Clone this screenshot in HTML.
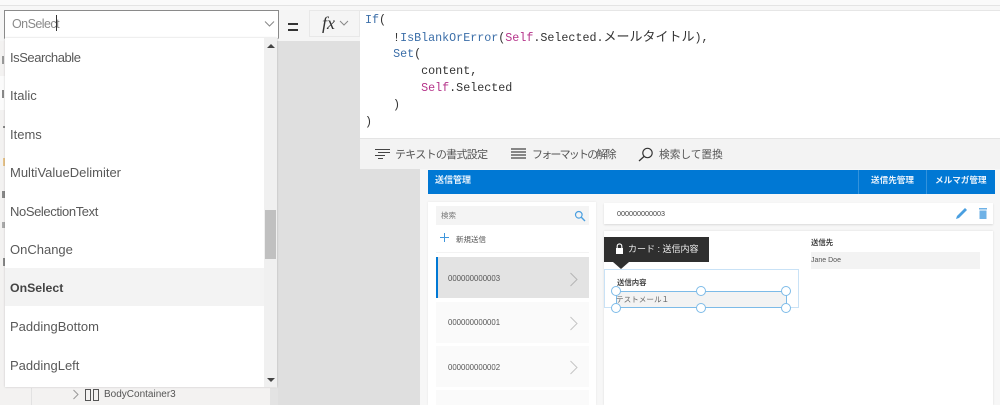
<!DOCTYPE html>
<html><head><meta charset="utf-8">
<style>
html,body{margin:0;padding:0}
body{width:1000px;height:405px;position:relative;overflow:hidden;background:#dfdfdf;font-family:"Liberation Sans","Noto Sans CJK JP",sans-serif;}
#w{position:absolute;left:0;top:0;width:1000px;height:405px;overflow:hidden;filter:blur(.35px)}
.a{position:absolute;white-space:nowrap}
.it{position:absolute;left:10px;font-size:13px;color:#595959;line-height:16px}
.m{font-family:"Liberation Mono","Noto Sans CJK JP",monospace;font-size:11.7px;color:#333;line-height:17px;position:absolute;left:365px;white-space:pre}
.m i{font-style:normal;font-size:13px}
.b{color:#3b6ea8}.p{color:#b5348a}
.t{color:#555;top:147px;line-height:16px}
.c{font-size:7.8px;color:#555}
.row{position:absolute;left:436px;width:153px;background:#fafafa}
.h{position:absolute;width:10px;height:10px;border:1.5px solid #7dbbe8;background:#fff;border-radius:50%;box-sizing:border-box}
</style></head><body><div id="w">
<div class="a" style="left:0;top:0;width:1000px;height:5px;background:#fafafa;border-bottom:1px solid #e4e4e4"></div>
<div class="a" style="left:0;top:6px;width:1000px;height:4px;background:#f7f7f7"></div>
<div class="a" style="left:0;top:10px;width:360px;height:31px;background:#f5f5f5"></div>
<div class="a" style="left:0;top:41px;width:277px;height:364px;background:#f3f2f1"></div>
<div class="a" style="left:0;top:76px;width:5px;height:34px;background:#fbfbfb"></div>
<div class="a" style="left:2px;top:56px;width:2px;height:8px;background:#999"></div>
<div class="a" style="left:2px;top:90px;width:2px;height:8px;background:#888"></div>
<div class="a" style="left:3px;top:126px;width:2px;height:2px;background:#888"></div>
<div class="a" style="left:3px;top:158px;width:2px;height:8px;background:#e8c48a"></div>
<div class="a" style="left:2px;top:191px;width:3px;height:7px;background:#888"></div>
<div class="a" style="left:2px;top:222px;width:3px;height:6px;background:#aaa"></div>
<div class="a" style="left:3px;top:258px;width:2px;height:8px;background:#888"></div>
<div class="a" style="left:31px;top:388px;width:239px;height:17px;background:#f3f2f1;border-left:1px solid #e2e2e2"></div>
<div class="a" style="left:270px;top:388px;width:8px;height:17px;background:#e3e3e3"></div>

<div class="a" style="left:4px;top:10px;width:273px;height:27px;background:#fff;border:1px solid #8a8a8a;border-bottom-color:#ddd"></div>
<div class="a" style="left:12px;top:16px;font-size:12.5px;letter-spacing:-.55px;color:#8a8a8a;line-height:16px">OnSelect</div>
<div class="a" style="left:56px;top:15px;width:1px;height:16px;background:#333"></div>
<svg class="a" style="left:264px;top:20px" width="11" height="8"><path d="M1 1.5L5.5 6L10 1.5" fill="none" stroke="#888" stroke-width="1"/></svg>
<div class="a" style="left:288px;top:23px;width:10px;height:2px;background:#333"></div>
<div class="a" style="left:288px;top:29px;width:10px;height:2px;background:#333"></div>
<div class="a" style="left:309px;top:10px;width:51px;height:27px;background:#f5f5f5;border:1px solid #e8e8e8;box-sizing:border-box"></div>
<div class="a" style="left:322px;top:13px;font-family:'Liberation Serif',serif;font-style:italic;font-size:18px;color:#333;line-height:20px">fx</div>
<svg class="a" style="left:339px;top:20px" width="10" height="7"><path d="M1 1L5 5L9 1" fill="none" stroke="#888" stroke-width="1"/></svg>

<div class="a" style="left:5px;top:38px;width:272px;height:349px;background:#fff;box-shadow:0 0 2px rgba(0,0,0,.2)"></div>
<div class="a" style="left:5px;top:268px;width:259px;height:38px;background:#f3f3f3"></div>
<div class="a" style="left:264px;top:38px;width:13px;height:349px;background:#f0f0f0"></div>
<div class="a" style="left:265px;top:210px;width:11px;height:49px;background:#c0c0c0"></div>
<div class="a" style="left:267px;top:44px;border:4px solid transparent;border-top:0;border-bottom:4px solid #444"></div>
<div class="a" style="left:267px;top:378px;border:4px solid transparent;border-bottom:0;border-top:4px solid #444"></div>
<div class="it" style="top:50px;letter-spacing:-.45px">IsSearchable</div>
<div class="it" style="top:88px">Italic</div>
<div class="it" style="top:127px">Items</div>
<div class="it" style="top:165px">MultiValueDelimiter</div>
<div class="it" style="top:204px;letter-spacing:-.4px">NoSelectionText</div>
<div class="it" style="top:242px">OnChange</div>
<div class="it" style="top:280px;font-weight:bold;color:#444;font-size:12.3px">OnSelect</div>
<div class="it" style="top:319px">PaddingBottom</div>
<div class="it" style="top:358px">PaddingLeft</div>
<svg class="a" style="left:72px;top:389px" width="8" height="11"><path d="M1.5 1L6 5.5L1.5 10" fill="none" stroke="#999" stroke-width="1"/></svg>
<div class="a" style="left:85px;top:389px;width:6px;height:12px;border:1px solid #555;box-sizing:border-box"></div>
<div class="a" style="left:93px;top:389px;width:6px;height:12px;border:1px solid #555;box-sizing:border-box"></div>
<div class="a" style="left:104px;top:387px;font-size:10px;color:#555;line-height:15px">BodyContainer3</div>

<div class="a" style="left:360px;top:10px;width:640px;height:128px;background:#fff;border-top:1px solid #e6e6e6;box-sizing:border-box"></div>
<div class="a" style="left:360px;top:138px;width:640px;height:31px;background:#f3f3f3;border-top:1px solid #e4e4e4;box-sizing:border-box"></div>
<div class="m" style="top:12px"><span class="b">If</span>(</div>
<div class="m" style="top:29px">    !<span class="b">IsBlankOrError</span>(<span class="p">Self</span>.Selected.<i>メールタイトル</i>),</div>
<div class="m" style="top:46px">    <span class="b">Set</span>(</div>
<div class="m" style="top:63px">        content,</div>
<div class="m" style="top:80px">        <span class="p">Self</span>.Selected</div>
<div class="m" style="top:97px">    )</div>
<div class="m" style="top:114px">)</div>

<svg class="a" style="left:375px;top:148px" width="16" height="13"><path d="M0 1.5H15M3 4.5H15M0 7.5H10M3 10.5H8" stroke="#444" stroke-width="1" fill="none"/></svg>
<div class="a t" style="left:395px;font-size:11px;letter-spacing:-.7px">テキストの書式設定</div>
<svg class="a" style="left:511px;top:148px" width="15" height="13"><path d="M0 1H15M0 4H15M0 7H15M0 10H15" stroke="#444" stroke-width="1.2" fill="none"/></svg>
<div class="a t" style="left:532px;font-size:11px;letter-spacing:-1.8px">フォーマットの解除</div>
<svg class="a" style="left:638px;top:147px" width="16" height="15"><circle cx="9.5" cy="6" r="4.7" fill="none" stroke="#333" stroke-width="1.2"/><path d="M6 9.5L1 14" stroke="#333" stroke-width="1.3"/></svg>
<div class="a t" style="left:659px;font-size:10.7px">検索して置換</div>

<div class="a" style="left:420px;top:169px;width:580px;height:236px;background:#f7f7f7"></div>
<div class="a" style="left:428px;top:170px;width:567px;height:24px;background:#0078d4"></div>
<div class="a" style="left:435px;top:174px;font-size:9px;font-weight:bold;color:#e8f2fb;line-height:13px">送信管理</div>
<div class="a" style="left:858px;top:170px;width:1px;height:24px;background:#3393dc"></div>
<div class="a" style="left:926px;top:170px;width:1px;height:24px;background:#3393dc"></div>
<div class="a" style="left:871px;top:174px;font-size:8.6px;font-weight:bold;color:#e8f2fb;line-height:13px">送信先管理</div>
<div class="a" style="left:935px;top:174px;font-size:8.6px;font-weight:bold;color:#e8f2fb;line-height:13px">メルマガ管理</div>

<div class="a" style="left:428px;top:202px;width:168px;height:203px;background:#fff;box-shadow:0 0 2px rgba(0,0,0,.08)"></div>
<div class="a" style="left:436px;top:206px;width:153px;height:19px;background:#f4f4f4"></div>
<div class="a c" style="left:441px;top:210px;color:#777;line-height:11px;font-size:7.5px">検索</div>
<svg class="a" style="left:574px;top:210px" width="12" height="12"><circle cx="4.8" cy="4.8" r="3.3" fill="none" stroke="#4a9fe0" stroke-width="1.2"/><path d="M7.3 7.3L11 11" stroke="#4a9fe0" stroke-width="1.4"/></svg>
<svg class="a" style="left:440px;top:233px" width="10" height="10"><path d="M4.5 0V9M0 4.5H9" stroke="#3f96dc" stroke-width="1"/></svg>
<div class="a c" style="left:456px;top:234px;line-height:11px;font-size:7.5px">新規送信</div>
<div class="a" style="left:436px;top:252px;width:153px;height:1px;background:#f3f3f3"></div>
<div class="a" style="left:436px;top:257px;width:153px;height:41px;background:#e3e3e3;border-left:2px solid #0078d4;box-sizing:border-box"></div>
<div class="a c" style="left:448px;top:273px;line-height:11px">000000000003</div>
<svg class="a" style="left:569px;top:272px" width="10" height="15"><path d="M1.5 1L8 7.5L1.5 14" fill="none" stroke="#b5b5b5" stroke-width="1"/></svg>
<div class="row" style="top:302px;height:41px"></div>
<div class="a c" style="left:448px;top:317px;line-height:11px">000000000001</div>
<svg class="a" style="left:569px;top:316px" width="10" height="15"><path d="M1.5 1L8 7.5L1.5 14" fill="none" stroke="#c5c5c5" stroke-width="1"/></svg>
<div class="row" style="top:346px;height:41px"></div>
<div class="a c" style="left:448px;top:362px;line-height:11px">000000000002</div>
<svg class="a" style="left:569px;top:360px" width="10" height="15"><path d="M1.5 1L8 7.5L1.5 14" fill="none" stroke="#c5c5c5" stroke-width="1"/></svg>
<div class="row" style="top:390px;height:15px"></div>

<div class="a" style="left:604px;top:203px;width:389px;height:21px;background:#fff;box-shadow:0 1px 2px rgba(0,0,0,.12)"></div>
<div class="a c" style="left:617px;top:208px;color:#444;line-height:11px;font-size:7.2px">000000000003</div>
<svg class="a" style="left:955px;top:207px" width="13" height="13"><path d="M1 12L2 9L10 1L12 3L4 11Z" fill="#4a9fe0"/></svg>
<svg class="a" style="left:978px;top:207px" width="10" height="13"><path d="M1 1H9V2.5H1ZM1.5 3.5H8.5V12H1.5Z" fill="#6fb2e6"/></svg>
<div class="a" style="left:604px;top:231px;width:389px;height:174px;background:#fff;box-shadow:0 0 2px rgba(0,0,0,.12)"></div>

<div class="a" style="left:811px;top:237px;font-size:7.4px;font-weight:bold;color:#444;line-height:11px">送信先</div>
<div class="a" style="left:811px;top:252px;width:169px;height:17px;background:#f3f3f3"></div>
<div class="a c" style="left:811px;top:256px;line-height:10px;font-size:7px">Jane Doe</div>

<div class="a" style="left:604px;top:269px;width:195px;height:39px;border:1px solid #c9e2f6;box-sizing:border-box;background:#fff"></div>
<div class="a" style="left:604px;top:237px;width:105px;height:25px;background:#2f2f2f"></div>
<div class="a" style="left:613px;top:262px;border:8px solid transparent;border-bottom:0;border-top:7px solid #2f2f2f"></div>
<svg class="a" style="left:615px;top:243px" width="9" height="12"><path d="M2.2 5V3.2a2.3 2.3 0 0 1 4.6 0V5" fill="none" stroke="#fff" stroke-width="1.1"/><rect x="1" y="5" width="7" height="6" fill="#fff"/></svg>
<div class="a" style="left:628px;top:243px;font-size:9px;color:#eee;line-height:13px">カード : 送信内容</div>
<div class="a" style="left:617px;top:277px;font-size:7.4px;font-weight:bold;color:#444;line-height:11px">送信内容</div>
<div class="a" style="left:616px;top:291px;width:171px;height:17px;background:#f3f3f3;border:1.5px solid #7dbbe8;box-sizing:border-box"></div>
<div class="h" style="left:611px;top:286px"></div>
<div class="h" style="left:696px;top:286px"></div>
<div class="h" style="left:781px;top:286px"></div>
<div class="h" style="left:611px;top:303px"></div>
<div class="h" style="left:696px;top:303px"></div>
<div class="h" style="left:781px;top:303px"></div>
<div class="a" style="left:616px;top:294px;font-size:7.6px;color:#666;line-height:12px">テストメール１</div>
</div></body></html>
